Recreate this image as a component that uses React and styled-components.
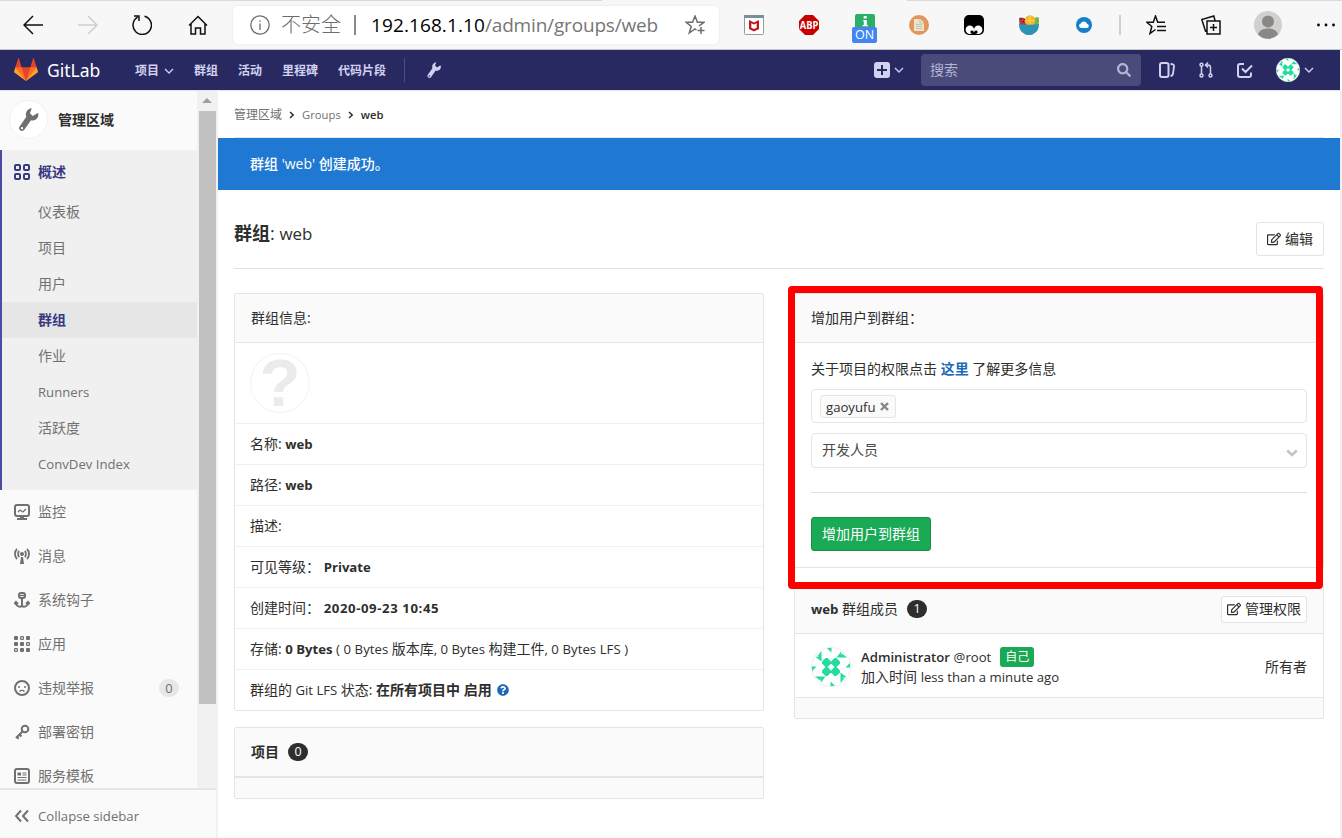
import React from 'react'
import styled, { createGlobalStyle } from 'styled-components'
import { FaSearch, FaRegEdit, FaQuestionCircle } from 'react-icons/fa'

const GlobalStyle = createGlobalStyle`
  * {
    box-sizing: border-box;
  }

  body {
    margin: 0;
    width: 1342px;
    height: 838px;
    overflow: hidden;
    background: #fff;
    color: #2e2e2e;
    font-family: 'Open Sans', 'Noto Sans CJK SC', sans-serif;
    font-size: 14px;
    line-height: 20px;
  }

  svg {
    display: block;
    flex: none;
  }
`

const Page = styled.div`
  display: flex;
  flex-direction: column;
  width: 1342px;
  height: 838px;
`

// latin glyphs run wide next to the CJK ones
const En = styled.span`
  font-size: 0.94em;
  letter-spacing: ${props => props.$spacing || '0'};
  font-weight: ${props => props.$weight || 'inherit'};
`

/* browser toolbar */

const Toolbar = styled.div`
  position: relative;
  display: flex;
  align-items: center;
  height: 50px;
  flex: none;
  background: #f7f7f7;
  border-bottom: 1px solid #c8c8c8;
  border-top: 1px solid #dadada;
`

const ActiveTab = styled.div`
  position: absolute;
  top: -1px;
  left: 602px;
  width: 305px;
  height: 1px;
  background: #f7f7f7;
`

const Slot = styled.div`
  display: flex;
  flex: none;
  justify-content: center;
  align-items: center;
  width: ${props => props.$width}px;
  margin-left: ${props => props.$gap || 0}px;
`

const AddressBar = styled.div`
  display: flex;
  align-items: center;
  flex: none;
  width: 486px;
  height: 38px;
  margin-left: 25px;
  padding: 0 14px 0 17px;
  border-radius: 5px;
  background: #fff;
  box-shadow: 0 0 3px rgba(0, 0, 0, 0.08);
  font-size: 20px;
  color: #6d6d6d;
  white-space: nowrap;
`

const Insecure = styled.span`
  margin-left: 11px;
  font-weight: 300;
`

const AddressDivider = styled.div`
  width: 2px;
  height: 20px;
  margin: 0 15px 0 13px;
  background: #8a8a8a;
`

const Url = styled.span`
  flex: 1;
  font-size: 19px;
  letter-spacing: -0.17px;
  color: #767676;

  b {
    font-weight: 400;
    letter-spacing: 0.1px;
    color: #000;
  }
`

const OnBadge = styled.div`
  width: 25px;
  height: 16px;
  border-radius: 2px;
  background: #4285f4;
  color: #fff;
  font-size: 12.5px;
  line-height: 15px;
  text-align: center;
`

const OnIcon = styled.div`
  display: flex;
  flex-direction: column;
  align-items: center;
  padding-top: 7px;
`

const ToolbarDivider = styled.div`
  width: 2px;
  height: 20px;
  margin-left: 27px;
  background: #cfcfcf;
`

/* gitlab header */

const Navbar = styled.header`
  display: flex;
  align-items: center;
  flex: none;
  width: 1340px;
  height: 40px;
  padding: 0 26px 0 14px;
  background: #292961;
  color: #d1d1f0;
`

const Brand = styled.div`
  margin-left: 9px;
  width: 88px;
  color: #fff;
  font-family: 'Noto Sans', 'Open Sans', sans-serif;
  font-size: 17.5px;
`

const NavLink = styled.a`
  display: flex;
  align-items: center;
  gap: 5px;
  margin-right: ${props => props.$after || 20}px;
  padding-top: 1px;
  font-size: 12px;
  font-weight: 700;
`

const NavDivider = styled.div`
  width: 1px;
  height: 24px;
  margin-right: 21px;
  background: #4e4e87;
`

const Search = styled.div`
  display: flex;
  align-items: center;
  justify-content: space-between;
  width: 220px;
  height: 32px;
  margin-left: 17px;
  padding: 0 10px 0 9px;
  border-radius: 4px;
  background: #4a4a7b;
  color: #b3b3d6;
`

const Spacer = styled.div`
  flex: 1;
`

const NavIcon = styled.div`
  margin-left: ${props => props.$gap}px;
`

/* layout */

const Body = styled.div`
  display: flex;
  flex: 1;
  min-height: 0;
  border-right: 2px solid #f0f0f0;
`

const Sidebar = styled.aside`
  display: flex;
  flex-direction: column;
  width: 218px;
  flex: none;
  background: #fafafa;
  border-right: 2px solid #f1f1f1;
  color: #707070;
`

const SidebarScroll = styled.div`
  display: flex;
  height: 698px;
  overflow: hidden;
  border-top: 1px solid #e5e5e5;
`

const SidebarContent = styled.div`
  width: 197px;
  flex: none;
`

const Scrollbar = styled.div`
  display: flex;
  flex-direction: column;
  align-items: flex-end;
  width: 19px;
  padding-top: 7px;
  background: #f1f1f1;
`

const ScrollArrow = styled.div`
  margin: 0 4px 8px 0;
  border: 5px solid transparent;
  border-top: 0;
  border-bottom-color: #a0a0a0;
`

const ScrollThumb = styled.div`
  width: 17px;
  height: 593px;
  background: #c1c1c1;
`

const ContextHeader = styled.div`
  display: flex;
  align-items: center;
  gap: 10px;
  height: 59px;
  padding: 0 0 2px 9px;
  font-weight: 700;
  color: #2e2e2e;
`

const ContextAvatar = styled.div`
  display: flex;
  align-items: center;
  justify-content: center;
  width: 39px;
  height: 39px;
  border: 1px solid #f2f2f2;
  border-radius: 50%;
  background: #fff;
  color: #707070;
`

const ActiveSection = styled.div`
  height: 340px;
  background: #f0f0f0;
  border-left: 2px solid #4b4ba3;
`

const SideItem = styled.a`
  display: flex;
  align-items: center;
  gap: 8px;
  height: 44px;
  padding: 0 18px 0 ${props => (props.$active ? 12 : 14)}px;
  font-weight: ${props => (props.$active ? 700 : 400)};
  color: ${props => (props.$active ? '#393982' : '#707070')};
`

const SubItem = styled.a`
  display: block;
  height: 36px;
  padding-left: 36px;
  line-height: 36px;
  background: ${props => (props.$active ? '#e6e6e6' : 'none')};
  font-weight: ${props => (props.$active ? 700 : 400)};
  color: ${props => (props.$active ? '#393982' : '#707070')};
`

const SideCount = styled.span`
  margin-left: auto;
  width: 20px;
  height: 18px;
  border-radius: 9px;
  background: #e7e7e7;
  font-size: 13px;
  line-height: 18px;
  text-align: center;
`

const Collapse = styled.div`
  display: flex;
  align-items: center;
  gap: 8px;
  flex: 1;
  padding: 4px 0 0 14px;
  border-top: 2px solid #e5e5e5;
`

const Main = styled.main`
  flex: 1;
  min-width: 0;
  border-top: 1px solid #e5e5e5;
`

const Breadcrumbs = styled.nav`
  display: flex;
  align-items: center;
  gap: 7px;
  height: 47px;
  margin: 0 16px;
  padding-top: 2px;
  border-bottom: 1px solid #e5e5e5;
  font-size: 12px;
  color: #707070;

  strong {
    font-weight: 600;
    color: #2e2e2e;
  }
`

const Flash = styled.div`
  height: 52px;
  padding-left: 32px;
  background: #1f78d1;
  color: #fff;
  font-weight: 500;
  line-height: 52px;
`

const TitleRow = styled.div`
  display: flex;
  justify-content: space-between;
  height: 79px;
  margin: 0 16px;
  padding-top: 32px;
  border-bottom: 1px solid #e1e1e1;
`

const Title = styled.h3`
  margin: 0;
  font-size: 18px;
  font-weight: 400;
  line-height: 22px;
`

const Button = styled.button`
  display: flex;
  align-items: center;
  gap: 4px;
  height: ${props => (props.$small ? 27 : 34)}px;
  padding: 0 ${props => (props.$small ? 5 : 10)}px;
  border: 1px solid ${props => (props.$primary ? '#168f48' : '#e3e3e3')};
  border-radius: 3px;
  background: ${props => (props.$primary ? '#1aaa55' : '#fff')};
  color: ${props => (props.$primary ? '#fff' : '#2e2e2e')};
  font: inherit;
  white-space: nowrap;
`

const Columns = styled.div`
  display: grid;
  grid-template-columns: 530px 530px;
  column-gap: 30px;
  align-items: start;
  padding: 24px 16px 0;
`

const Column = styled.div`
  display: flex;
  flex-direction: column;
  gap: 16px;
`

const Panel = styled.section`
  border: 1px solid #e5e5e5;
  border-radius: 2px;
`

const PanelHeading = styled.div`
  display: flex;
  align-items: center;
  height: 49px;
  padding: 0 16px;
  background: #fafafa;
  border-bottom: 1px solid #e5e5e5;
`

const PanelFooter = styled.div`
  height: 21px;
  background: #fafafa;
  border-top: 1px solid #e5e5e5;
`

const PanelBody = styled.div`
  height: 224px;
  padding: 16px 16px 0;
`

const InfoRow = styled.div`
  height: ${props => props.$height || 41}px;
  padding: 10px 15px;
  border-bottom: 1px solid #f0f0f0;
  white-space: pre;

  &:last-child {
    height: 40px;
    border-bottom: 0;
  }

  strong {
    font-weight: 700;
  }

  svg {
    display: inline-block;
    margin-left: 5px;
    vertical-align: -1px;
    color: #1b69b6;
  }
`

const GroupAvatar = styled.div`
  width: 60px;
  height: 60px;
  border: 1px solid #f2f2f2;
  border-radius: 50%;
  color: #ebebeb;
  font-family: 'Liberation Sans', sans-serif;
  font-size: 67px;
  font-weight: 700;
  line-height: 57px;
  text-align: center;
`

const Badge = styled.span`
  width: 20px;
  height: 18px;
  margin-left: 9px;
  border-radius: 9px;
  background: #2e2e2e;
  color: #fff;
  font-size: 12.5px;
  line-height: 18px;
  text-align: center;
`

const Link = styled.a`
  color: #1b69b6;
  font-weight: 700;
`

const TokenInput = styled.div`
  display: flex;
  align-items: center;
  height: 34px;
  margin-top: 10px;
  padding: 1px 0 0 8px;
  border: 1px solid #e5e5e5;
  border-radius: 4px;
`

const Token = styled.span`
  display: flex;
  align-items: center;
  gap: 4px;
  height: 23px;
  padding: 0 6px 0 5px;
  border: 1px solid #e5e5e5;
  border-radius: 3px;
  background: #fafafa;
  color: #2e2e2e;
`

const Select = styled.div`
  display: flex;
  align-items: center;
  justify-content: space-between;
  height: 35px;
  margin-top: 10px;
  padding: 0 8px 2px 10px;
  border: 1px solid #e5e5e5;
  border-radius: 4px;
  color: #4b4b4b;

  svg {
    margin-top: 6px;
  }
`

const Rule = styled.hr`
  height: 1px;
  margin: 24px 0;
  border: 0;
  background: #e1e1e1;
`

// marker box drawn over the add-user panel
const Highlight = styled.div`
  position: absolute;
  top: 286px;
  left: 788px;
  width: 535px;
  height: 303px;
  border: 7px solid #f00;
  border-radius: 4px;
`

const Member = styled.div`
  display: flex;
  align-items: center;
  gap: 10px;
  height: 63px;
  padding: 3px 16px 0;
`

const MemberName = styled.div`
  display: flex;
  align-items: center;
`

const SelfLabel = styled.span`
  height: 20px;
  margin-left: 9px;
  padding: 0 5px;
  border-radius: 3px;
  background: #1aaa55;
  color: #fff;
  font-size: 12px;
`

const Chevron = () => (
  <svg width="10" height="6" viewBox="0 0 10 6" fill="none" stroke="currentColor" strokeWidth="1.3">
    <path d="M1 1l4 4 4-4" />
  </svg>
)

const SelectArrow = () => (
  <svg width="12" height="8" viewBox="0 0 12 8" fill="none" stroke="#c4c4c4" strokeWidth="2.6">
    <path d="M1.200 1.500L6 6l4.800-4.500" />
  </svg>
)

const RemoveIcon = () => (
  <svg width="9" height="9" viewBox="0 0 9 9" fill="none" stroke="#858585" strokeWidth="2.4">
    <path d="M1 1l7 7M8 1L1 8" />
  </svg>
)

const Crumb = () => (
  <svg width="6" height="8" viewBox="0 0 6 8" fill="none" stroke="#2e2e2e" strokeWidth="1.5">
    <path d="M1 1l3.2 3L1 7" />
  </svg>
)

const Wrench = ({ size }) => (
  <svg width={size} height={size} viewBox="0 0 16 16" fill="currentColor">
    <path fillRule="evenodd" d="M10.300.2L9 3.600l2 1.900L14.100 3.600l.7.2c.4 2.400-.9 4.500-3.400 4.900-.7.100-1.200.1-1.700-.1L5.200 15c-.7 1-2 1.200-2.900.6-.9-.6-1.100-1.800-.5-2.800l4.600-6.600C5.500 3.400 7.300.3 10.300.2zM3.500 13.200a.8.800 0 1 0 0 1.600.8.800 0 0 0 0-1.600z" />
  </svg>
)

const Tanuki = () => (
  <svg width="24" height="24" viewBox="0 0 36 36">
    <path fill="#e24329" d="M2 14l9.38 9v-9L7.4.4c-.14-.45-.8-.45-.94 0z" />
    <path fill="#e24329" d="M34 14l-9.38 9v-9L28.6.4c.14-.45.8-.45.94 0z" />
    <path fill="#e24329" d="M18 34.38L3 14h30z" />
    <path fill="#fc6d26" d="M18 34.38L11.38 14H2l6 11.38z" />
    <path fill="#fc6d26" d="M18 34.38L24.62 14H34l-6 11.38z" />
    <path fill="#fca326" d="M2 14L.1 20.16c-.18.56 0 1.18.5 1.54L18 34.38z" />
    <path fill="#fca326" d="M34 14l1.9 6.16c.18.56 0 1.18-.5 1.54L18 34.38z" />
  </svg>
)

const Identicon = ({ size }) => (
  <svg width={size} height={size} viewBox="0 0 40 40">
    <circle cx="20" cy="20" r="19.5" fill="#fff" stroke="#eee" />
    <g fill="#24dd9c">
      {[0, 90, 180, 270].map(angle => (
        <g key={angle} transform={`rotate(${angle} 20 20)`}>
          <path d="M14.500 11h2l3.500 3.500v2L16.500 20h-2L11 16.500v-2z" />
          <path d="M16 1.200L20.500.8V5.500zM10.500 4v5.500L6.500 9zM4.500 10L10.500 8.800V14.500z" />
        </g>
      ))}
    </g>
  </svg>
)

const sideIcons = {
  overview: (
    <g fill="none" stroke="currentColor" strokeWidth="2">
      <rect x="1" y="1" width="5" height="5" rx="1" />
      <rect x="10" y="1" width="5" height="5" rx="1" />
      <rect x="1" y="10" width="5" height="5" rx="1" />
      <rect x="10" y="10" width="5" height="5" rx="1" />
    </g>
  ),
  monitor: (
    <g fill="none" stroke="currentColor" strokeWidth="2">
      <rect x="1" y="1" width="14" height="11" rx="2" />
      <path d="M3 15h10M6 13.5h4" />
      <path d="M4 8l2-2 3 2 3-3" strokeWidth="1.3" />
    </g>
  ),
  messages: (
    <g fill="none" stroke="currentColor" strokeWidth="1.8">
      <path d="M3 1C.3 3.500.3 8.500 3 11M13 1c2.700 2.500 2.700 7.500 0 10M5.200 3C3.700 4.500 3.700 7.500 5.200 9M10.800 3c1.500 1.500 1.500 4.500 0 6" />
      <circle cx="8" cy="6" r="2" fill="currentColor" stroke="none" />
      <path d="M7 9h2l1 7H6z" fill="currentColor" stroke="none" />
    </g>
  ),
  anchor: (
    <g fill="none" stroke="currentColor" strokeWidth="2">
      <rect x="5" y="1" width="6" height="5" rx="2" />
      <path d="M5 3.5h6" strokeWidth="1.3" />
      <path d="M8 6v9M2 10.500C2 13 4 14.700 6 14.700c1 0 2-.7 2-1.700 0 1 1 1.700 2 1.700 2 0 4-1.700 4-4.200M.3 12L2 10l2 2M12 12l2-2 1.700 2" />
    </g>
  ),
  applications: (
    <g fill="currentColor">
      {[0, 6, 12].map(y => [0, 6, 12].map(x => {
        const hollow = (x === 6 && y === 0) || (x === 12 && y === 6) || (x === 0 && y === 12)
        return hollow
          ? <rect key={`${x}${y}`} x={x + 0.6} y={y + 0.6} width="2.8" height="2.8" rx=".6" fill="none" stroke="currentColor" strokeWidth="1.2" />
          : <rect key={`${x}${y}`} x={x} y={y} width="4" height="4" rx="1" />
      }))}
    </g>
  ),
  abuse: (
    <g fill="none" stroke="currentColor">
      <circle cx="8" cy="8" r="7" strokeWidth="2" />
      <path d="M5.500 11.500c1.200-1.500 3.800-1.500 5 0" strokeWidth="1.300" />
      <circle cx="5" cy="7" r="1" fill="currentColor" stroke="none" />
      <circle cx="11" cy="7" r="1" fill="currentColor" stroke="none" />
    </g>
  ),
  key: (
    <g fill="none" stroke="currentColor" strokeWidth="2">
      <circle cx="11" cy="5" r="3.300" />
      <path d="M8.500 7.500L2 14M5.500 10.500l2 2M3 13l1.700 1.700" />
    </g>
  ),
  template: (
    <g fill="none" stroke="currentColor">
      <rect x="1" y="1" width="14" height="14" rx="2" strokeWidth="2" />
      <path d="M8.500 5h4M8.500 7h4M3.500 9.500h9M3.500 12h9" strokeWidth="1.100" />
      <rect x="3.500" y="4.500" width="3.500" height="3" fill="currentColor" stroke="none" />
    </g>
  ),
  collapse: (
    <path d="M7 2.500L2 8l5 5.500M14 2.500L9 8l5 5.500" fill="none" stroke="currentColor" strokeWidth="2" />
  ),
}

const SideIcon = ({ name }) => (
  <svg width="16" height="16" viewBox="0 0 16 16">{sideIcons[name]}</svg>
)

const LineIcon = ({ size, color, width, children }) => (
  <svg width={size} height={size} viewBox="0 0 20 20" fill="none" stroke={color || '#111'} strokeWidth={width || 1.5}>
    {children}
  </svg>
)

const subItems = ['仪表板', '项目', '用户', '群组', '作业', 'Runners', '活跃度', 'ConvDev Index']

const sideItems = [
  { icon: 'monitor', label: '监控' },
  { icon: 'messages', label: '消息' },
  { icon: 'anchor', label: '系统钩子' },
  { icon: 'applications', label: '应用' },
  { icon: 'abuse', label: '违规举报', count: 0 },
  { icon: 'key', label: '部署密钥' },
  { icon: 'template', label: '服务模板' },
]

const BrowserToolbar = () => (
  <Toolbar>
    <ActiveTab />
    <Slot $width={20} $gap={23}>
      <LineIcon size={20}><path d="M20 10H1M10 1L1 10l9 9" /></LineIcon>
    </Slot>
    <Slot $width={20} $gap={35}>
      <LineIcon size={20} color="#cfcfcf"><path d="M0 10h19M10 1l9 9-9 9" /></LineIcon>
    </Slot>
    <Slot $width={20} $gap={34}>
      <LineIcon size={20}><path d="M12.500 1.300a9.200 9.200 0 1 1-6.800.9M2 1h5v5" /></LineIcon>
    </Slot>
    <Slot $width={20} $gap={36}>
      <LineIcon size={20}><path d="M1 10.500L10 1.500l9 9M3 9v10h4.500v-6h5v6H17V9" /></LineIcon>
    </Slot>
    <AddressBar>
      <LineIcon size={20} color="#6d6d6d" width={1.3}>
        <circle cx="10" cy="10" r="9.200" />
        <path d="M10 8.500V15M10 5.200v1.600" />
      </LineIcon>
      <Insecure>不安全</Insecure>
      <AddressDivider />
      <Url><b>192.168.1.10</b>/admin/groups/web</Url>
      <LineIcon size={20} color="#6d6d6d">
        <path d="M14 11l5-3.800h-6.600L10 1 7.600 7.200H1l5.200 4.200L4.300 18l5.700-4 1.500 1M16 12v7M12.500 15.500h7" />
      </LineIcon>
    </AddressBar>
    <Slot $width={20} $gap={25}>
      <svg width="20" height="20" viewBox="0 0 20 20">
        <rect x=".5" y=".5" width="19" height="19" rx="1" fill="#fff" stroke="#999" />
        <path d="M0 0h20v3H0z" fill="#78909c" />
        <path d="M5 5l5 2.500L15 5v9l-5 2.500L5 14zm2.300 3.200v4.500L10 14l2.700-1.300V8.200L10 9.600z" fill="#c01818" fillRule="evenodd" />
      </svg>
    </Slot>
    <Slot $width={20} $gap={35}>
      <svg width="20" height="20" viewBox="0 0 20 20">
        <path d="M6 0h8l6 6v8l-6 6H6l-6-6V6z" fill="#c70000" />
        <text x="10" y="14" fill="#fff" fontSize="11" fontWeight="700" fontFamily="'Open Sans', sans-serif" textAnchor="middle" textLength="18.500" lengthAdjust="spacingAndGlyphs">ABP</text>
      </svg>
    </Slot>
    <Slot $width={25} $gap={33}>
      <OnIcon>
        <svg width="20" height="13" viewBox="0 0 20 13">
          <rect width="20" height="16" rx="2" fill="#2bae66" />
          <path d="M8.700 2h3v2.500h-3zM8.200 6h3.600v5h1.200v1.200H7.600V11h1.200V7.200h-.6z" fill="#fff" />
        </svg>
        <OnBadge>ON</OnBadge>
      </OnIcon>
    </Slot>
    <Slot $width={20} $gap={32}>
      <svg width="20" height="20" viewBox="0 0 20 20">
        <circle cx="10" cy="10" r="10" fill="#e3965b" />
        <path d="M5 4h6.500L15 7.500V16H5z" fill="#ebe4ce" />
        <path d="M11 4v4h4M7 9.500h6M7 11.500h6M7 13.500h6" fill="none" stroke="#c9c3ad" />
      </svg>
    </Slot>
    <Slot $width={20} $gap={35}>
      <svg width="20" height="20" viewBox="0 0 20 20">
        <rect width="20" height="20" rx="5" fill="#000" />
        <circle cx="5.800" cy="14.800" r="4.200" fill="#fff" />
        <circle cx="14.200" cy="14.800" r="4.200" fill="#fff" />
        <circle cx="7.800" cy="17" r="1.400" />
        <circle cx="12.200" cy="17" r="1.400" />
      </svg>
    </Slot>
    <Slot $width={20} $gap={35}>
      <svg width="20" height="20" viewBox="0 0 20 20">
        <path d="M0 3c4-2 8 1 10 7H.5z" fill="#b13a43" />
        <path d="M14 3l5.500-1c.8 3 .6 5.500 0 8H13z" fill="#6fb64b" />
        <circle cx="11" cy="5.500" r="5.300" fill="#f8b525" />
        <path d="M11 1v8M7 5.500h8" stroke="#fde07c" strokeWidth=".8" />
        <path d="M2 3.500v1M4 6.500h1M5.500 4v1" stroke="#421b20" />
        <path d="M0 9c3 1 17 1 20 0 0 5-2 8-5 9.500-2 2-8 2-10 0C2 17 0 14 0 9z" fill="#2c95b5" />
      </svg>
    </Slot>
    <Slot $width={16} $gap={37}>
      <svg width="16" height="16" viewBox="0 0 16 16">
        <circle cx="8" cy="8" r="8" fill="#1580c8" />
        <path d="M5 11a2.300 2.300 0 0 1-.2-4.500 3.300 3.300 0 0 1 6.200.2A2.200 2.200 0 0 1 11.200 11z" fill="#fff" />
      </svg>
    </Slot>
    <ToolbarDivider />
    <Slot $width={20} $gap={25}>
      <LineIcon size={20}>
        <path d="M9.500 14.500L4 18.500l1.800-7L.8 7.200h6.500L9.500 1l2.200 6.200H19M11 11.500h9M11 15.500h9" />
      </LineIcon>
    </Slot>
    <Slot $width={20} $gap={35}>
      <LineIcon size={20}>
        <path d="M6 6h13v13H6zM12.500 9v7M9 12.500h7M6 15.500L4.500 16 .8 4.500l12-3.500L14 5.500" />
      </LineIcon>
    </Slot>
    <Slot $width={28} $gap={33}>
      <svg width="28" height="28" viewBox="0 0 28 28">
        <circle cx="14" cy="14" r="14" fill="#d2d0ce" />
        <circle cx="14" cy="10.500" r="6" fill="#8a8886" />
        <path d="M4 23.500c1-4 5-6 10-6s9 2 10 6A14 14 0 0 1 4 23.500z" fill="#8a8886" />
      </svg>
    </Slot>
    <Slot $width={20} $gap={34}>
      <svg width="20" height="4" viewBox="0 0 20 4">
        <circle cx="2.500" cy="2" r="1.400" />
        <circle cx="10" cy="2" r="1.400" />
        <circle cx="17.500" cy="2" r="1.400" />
      </svg>
    </Slot>
  </Toolbar>
)

const GitlabNavbar = () => (
  <Navbar>
    <Tanuki />
    <Brand>GitLab</Brand>
    <NavLink>项目 <Chevron /></NavLink>
    <NavLink>群组</NavLink>
    <NavLink>活动</NavLink>
    <NavLink>里程碑</NavLink>
    <NavLink $after={18}>代码片段</NavLink>
    <NavDivider />
    <Wrench size={16} />
    <Spacer />
    <svg width="16" height="16" viewBox="0 0 16 16">
      <rect width="16" height="16" rx="3" fill="#d1d1f0" />
      <path d="M8 3v10M3 8h10" stroke="#292961" strokeWidth="2" />
    </svg>
    <NavIcon $gap={4}><Chevron /></NavIcon>
    <Search>搜索 <FaSearch size={14} /></Search>
    <NavIcon $gap={18}>
      <svg width="16" height="16" viewBox="0 0 16 16" fill="none" stroke="currentColor" strokeWidth="2">
        <rect x="1" y="1" width="8.500" height="14" rx="2" />
        <path d="M11.500 2c2.500 0 3.700.5 3.500 2.500l-1 7c-.2 1.500-1 2.300-2.500 2.300" strokeWidth="1.800" />
      </svg>
    </NavIcon>
    <NavIcon $gap={23}>
      <svg width="16" height="16" viewBox="0 0 16 16" fill="none" stroke="currentColor" strokeWidth="1.500">
        <circle cx="3.500" cy="2.700" r="1.500" />
        <circle cx="3.500" cy="13.500" r="1.500" />
        <circle cx="12.500" cy="13.500" r="1.500" />
        <path d="M3.500 4.500v7.500M12.500 12V5.500c0-1.500-1-2.500-2.500-2.500H8M10 .5L7.500 3 10 5.500" />
      </svg>
    </NavIcon>
    <NavIcon $gap={23}>
      <svg width="16" height="16" viewBox="0 0 16 16" fill="none" stroke="currentColor" strokeWidth="2">
        <path d="M7 2H3a2 2 0 0 0-2 2v9a2 2 0 0 0 2 2h9a2 2 0 0 0 2-2v-2.500M5 6.500l3.500 3.500L15 3.500" />
      </svg>
    </NavIcon>
    <NavIcon $gap={23}><Identicon size={24} /></NavIcon>
    <NavIcon $gap={4}><Chevron /></NavIcon>
  </Navbar>
)

const AdminSidebar = () => (
  <Sidebar>
    <SidebarScroll>
      <SidebarContent>
        <ContextHeader>
          <ContextAvatar><Wrench size={23} /></ContextAvatar>
          管理区域
        </ContextHeader>
        <ActiveSection>
          <SideItem $active><SideIcon name="overview" />概述</SideItem>
          {subItems.map(label => (
            <SubItem key={label} $active={label === '群组'}>
              {/^[A-Z]/.test(label) ? <En>{label}</En> : label}
            </SubItem>
          ))}
        </ActiveSection>
        {sideItems.map(({ icon, label, count }) => (
          <SideItem key={label}>
            <SideIcon name={icon} />
            {label}
            {count !== undefined && <SideCount>{count}</SideCount>}
          </SideItem>
        ))}
      </SidebarContent>
      <Scrollbar>
        <ScrollArrow />
        <ScrollThumb />
      </Scrollbar>
    </SidebarScroll>
    <Collapse><SideIcon name="collapse" /><En>Collapse sidebar</En></Collapse>
  </Sidebar>
)

const GroupInfo = () => (
  <Panel>
    <PanelHeading>群组信息:</PanelHeading>
    <InfoRow $height={81}><GroupAvatar>?</GroupAvatar></InfoRow>
    <InfoRow>名称: <strong><En>web</En></strong></InfoRow>
    <InfoRow>路径: <strong><En>web</En></strong></InfoRow>
    <InfoRow>描述:</InfoRow>
    <InfoRow>可见等级： <strong><En>Private</En></strong></InfoRow>
    <InfoRow>创建时间： <strong><En $spacing="0.6px">2020-09-23 10:45</En></strong></InfoRow>
    <InfoRow>
      存储: <strong><En>0 Bytes</En></strong><En $spacing="0.06px"> ( 0 Bytes </En>版本库<En>, 0 Bytes </En>构建工件<En $spacing="0.06px">, 0 Bytes LFS )</En>
    </InfoRow>
    <InfoRow>群组的<En> Git LFS </En>状态: <strong>在所有项目中 启用</strong><FaQuestionCircle size={12} /></InfoRow>
  </Panel>
)

const AddUsers = () => (
  <Panel>
    <PanelHeading>增加用户到群组：</PanelHeading>
    <PanelBody>
      <div>关于项目的权限点击 <Link>这里</Link> 了解更多信息</div>
      <TokenInput>
        <Token><En>gaoyufu</En> <RemoveIcon /></Token>
      </TokenInput>
      <Select>开发人员 <SelectArrow /></Select>
      <Rule />
      <Button $primary>增加用户到群组</Button>
    </PanelBody>
  </Panel>
)

const Members = () => (
  <Panel>
    <PanelHeading>
      <En $weight={700}>web</En>&nbsp;群组成员
      <Badge>1</Badge>
      <Spacer />
      <Button $small><FaRegEdit size={14} />管理权限</Button>
    </PanelHeading>
    <Member>
      <Identicon size={40} />
      <div>
        <MemberName>
          <En $weight={600}>Administrator</En>&nbsp;<En>@root</En>
          <SelfLabel>自己</SelfLabel>
        </MemberName>
        <div>加入时间 <En>less than a minute ago</En></div>
      </div>
      <Spacer />
      所有者
    </Member>
    <PanelFooter />
  </Panel>
)

const App = () => (
  <Page>
    <GlobalStyle />
    <BrowserToolbar />
    <GitlabNavbar />
    <Body>
      <AdminSidebar />
      <Main>
        <Breadcrumbs>
          管理区域 <Crumb /> <En>Groups</En> <Crumb /> <strong><En>web</En></strong>
        </Breadcrumbs>
        <Flash>群组 'web' 创建成功。</Flash>
        <TitleRow>
          <Title><strong>群组</strong>: <En>web</En></Title>
          <Button><FaRegEdit size={14} />编辑</Button>
        </TitleRow>
        <Columns>
          <Column>
            <GroupInfo />
            <Panel>
              <PanelHeading><b>项目</b><Badge>0</Badge></PanelHeading>
              <PanelFooter />
            </Panel>
          </Column>
          <Column>
            <AddUsers />
            <Members />
          </Column>
        </Columns>
      </Main>
    </Body>
    <Highlight />
  </Page>
)

export default App
